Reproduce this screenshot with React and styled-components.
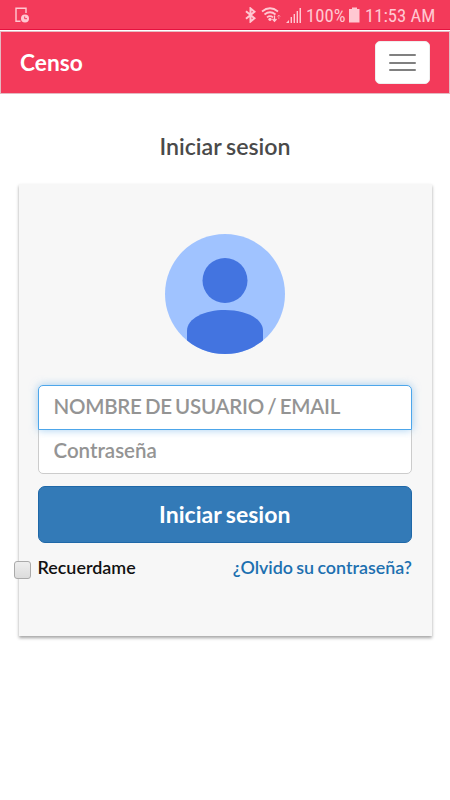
import { useState } from "react";
import styled, { createGlobalStyle } from "styled-components";

function StatusBar() {
  return (
    <STYLEDStatusBar>
      <svg width="15" height="16" viewBox="0 0 15 16" fill="none">
        <path
          d="M5.5 14.2H1V1.2H11V6"
          stroke="currentColor"
          strokeWidth="1.4"
        />
        <circle cx="10" cy="11.5" r="4" fill="currentColor" />
        <path d="M9.7 9.5V11.7H12" stroke="#f33a5a" />
      </svg>
      <STYLEDStatusIcons>
        <svg width="11" height="16" viewBox="0 0 11 16" fill="none">
          <path
            d="M1 4.3L9.5 11.3L5.5 14.6V1.4L9.5 4.7L1 11.7"
            stroke="currentColor"
            strokeWidth="2"
          />
        </svg>
        <svg width="20" height="16" viewBox="0 0 20 16" fill="none">
          <g stroke="currentColor" strokeWidth="1.7">
            <path d="M1 4.5Q9 -2 17 4.5" />
            <path d="M3.5 7.5Q9 3 14.5 7.5" />
            <path d="M6 10.3Q9 7.8 12 10.3" />
          </g>
          <circle cx="9" cy="12.3" r="1.6" fill="currentColor" />
          <path
            d="M13.5 8.5V14M11.5 12L13.5 14.2L15.5 12"
            stroke="currentColor"
            strokeWidth="1.3"
          />
          <path
            d="M17.8 12V8M16.3 9.7L17.8 8L19.3 9.7"
            stroke="currentColor"
            opacity="0.5"
          />
        </svg>
        <svg width="15" height="16" viewBox="0 0 15 16" fill="currentColor">
          <path d="M0 16L3 13V16Z" />
          <rect x="4.6" y="10" width="1.4" height="6" />
          <rect x="7.6" y="7" width="1.4" height="9" />
          <rect x="10.6" y="4" width="1.4" height="12" />
          <rect x="13.5" y="1" width="1.5" height="15" />
        </svg>
        <STYLEDStatusText $width={38}>100%</STYLEDStatusText>
        <svg width="11" height="16" viewBox="0 0 11 16" fill="currentColor">
          <path d="M3 0.5H8V2H10.5V15.5H0V2H3Z" />
        </svg>
        <STYLEDStatusText $width={71}>11:53 AM</STYLEDStatusText>
      </STYLEDStatusIcons>
    </STYLEDStatusBar>
  );
}

function Avatar() {
  return (
    <STYLEDAvatar viewBox="0 0 120 120">
      <clipPath id="avatar">
        <circle cx="60" cy="60" r="60" />
      </clipPath>
      <g clipPath="url(#avatar)">
        <rect width="120" height="120" fill="#a0c3ff" />
        <circle cx="60" cy="46.5" r="22.5" fill="#4374e0" />
        <path
          d="M22 120V97C22 84 40 76 60 76S98 84 98 97V120Z"
          fill="#4374e0"
        />
      </g>
    </STYLEDAvatar>
  );
}

function App() {
  const [email, setEmail] = useState("");
  const [password, setPassword] = useState("");

  const handleSubmit = (e) => {
    e.preventDefault();
  };

  return (
    <STYLEDPage>
      <GlobalStyle />
      <StatusBar />
      <STYLEDNavbar>
        <STYLEDBrand>Censo</STYLEDBrand>
        <STYLEDToggle type="button" aria-label="Menu">
          <STYLEDToggleBar />
          <STYLEDToggleBar />
          <STYLEDToggleBar />
        </STYLEDToggle>
      </STYLEDNavbar>
      <STYLEDTitle>Iniciar sesion</STYLEDTitle>
      <STYLEDCard onSubmit={handleSubmit}>
        <Avatar />
        <STYLEDInput
          $focused
          type="text"
          placeholder="NOMBRE DE USUARIO / EMAIL"
          value={email}
          onChange={(e) => setEmail(e.target.value)}
        />
        <STYLEDInput
          type="password"
          placeholder="Contraseña"
          value={password}
          onChange={(e) => setPassword(e.target.value)}
        />
        <STYLEDSubmit type="submit">Iniciar sesion</STYLEDSubmit>
        <STYLEDOptions>
          <STYLEDRemember>
            <STYLEDCheckbox type="checkbox" />
            Recuerdame
          </STYLEDRemember>
          <STYLEDLink href="#">¿Olvido su contraseña?</STYLEDLink>
        </STYLEDOptions>
      </STYLEDCard>
    </STYLEDPage>
  );
}

export default App;

const GlobalStyle = createGlobalStyle`
  * {
    box-sizing: border-box;
  }
  body {
    margin: 0;
    background-color: #fff;
    font-family: Lato, sans-serif;
  }
`;

const STYLEDPage = styled.div`
  display: flex;
  flex-direction: column;
  min-height: 100vh;
`;

const STYLEDStatusBar = styled.div`
  display: flex;
  justify-content: space-between;
  height: 30px;
  padding: 7px 14px 0 15px;
  color: #ffc8d2;
  background-color: #f33a5a;
  border-bottom: 1px solid #e5123f;
`;
const STYLEDStatusIcons = styled.div`
  display: flex;
  gap: 5px;
`;
const STYLEDStatusText = styled.span`
  width: ${(props) => props.$width}px;
  font-family: "Roboto Condensed", Roboto, sans-serif;
  font-stretch: condensed;
  font-size: 18.7px;
  line-height: 18px;
  white-space: nowrap;
`;

const STYLEDNavbar = styled.nav`
  display: flex;
  align-items: center;
  justify-content: space-between;
  height: 63px;
  margin-top: 1px;
  padding: 0 19px;
  background-color: #f33a5a;
  border: 1px solid #e4b9c1;
`;
const STYLEDBrand = styled.span`
  color: #fff;
  font-size: 22.7px;
  font-weight: 700;
`;
const STYLEDToggle = styled.button`
  display: flex;
  flex-direction: column;
  align-items: center;
  justify-content: center;
  gap: 5.5px;
  width: 55px;
  height: 43px;
  padding: 0;
  border: 1px solid #eee;
  border-radius: 5px;
  background-color: #fff;
`;
const STYLEDToggleBar = styled.span`
  width: 27px;
  height: 2px;
  border-radius: 1px;
  background-color: #808080;
`;

const STYLEDTitle = styled.h1`
  margin: 38px 0 24px;
  color: #4a4a4a;
  font-size: 23.2px;
  font-weight: 600;
  line-height: 28px;
  text-align: center;
  word-spacing: -1px;
`;

const STYLEDCard = styled.form`
  display: flex;
  flex-direction: column;
  width: 413px;
  height: 452px;
  margin: 0 0 0 18.5px;
  padding: 50px 19.5px 0 19px;
  background-color: #f7f7f7;
  box-shadow: 0 2px 3px rgba(0, 0, 0, 0.36);
`;
const STYLEDAvatar = styled.svg`
  align-self: center;
  width: 120px;
  height: 120px;
  margin-bottom: 31px;
`;
const STYLEDInput = styled.input`
  position: relative;
  z-index: ${(props) => (props.$focused ? 1 : 0)};
  height: 45px;
  margin-bottom: ${(props) => (props.$focused ? "-1px" : "12px")};
  padding: 0 15px 4px;
  border: 1px solid ${(props) => (props.$focused ? "#4da6ea" : "#ccc")};
  border-radius: ${(props) => (props.$focused ? "5px 5px 0 0" : "0 0 5px 5px")};
  outline: none;
  background-color: #fff;
  box-shadow: ${(props) =>
    props.$focused ? "0 0 9px rgba(102, 175, 233, 0.6)" : "none"};
  font-family: Lato, sans-serif;
  font-size: 20.5px;
  font-weight: 600;
  letter-spacing: ${(props) => (props.$focused ? "-0.25px" : "0")};
  word-spacing: -1.6px;

  &::placeholder {
    color: #949494;
  }
`;
const STYLEDSubmit = styled.button`
  height: 57px;
  padding: 0 0 2px;
  border: 1px solid #1f68a8;
  border-radius: 7px;
  color: #fff;
  background-color: #337ab7;
  font-family: Lato, sans-serif;
  font-size: 23px;
  font-weight: 700;
  word-spacing: -1px;
`;

const STYLEDOptions = styled.div`
  display: flex;
  justify-content: space-between;
  margin-top: 12px;
  font-size: 17.9px;
  font-weight: 600;
  line-height: 24px;
  word-spacing: -1.2px;
`;
const STYLEDRemember = styled.label`
  display: flex;
  color: #111;
`;
const STYLEDCheckbox = styled.input`
  appearance: none;
  width: 17px;
  height: 18px;
  margin: 6px 7px 0 -24px;
  border: 1px solid #aaa;
  border-radius: 3px;
  background: linear-gradient(#eee, #dcdcdc);
`;
const STYLEDLink = styled.a`
  color: #1d70b0;
  text-decoration: none;
`;
